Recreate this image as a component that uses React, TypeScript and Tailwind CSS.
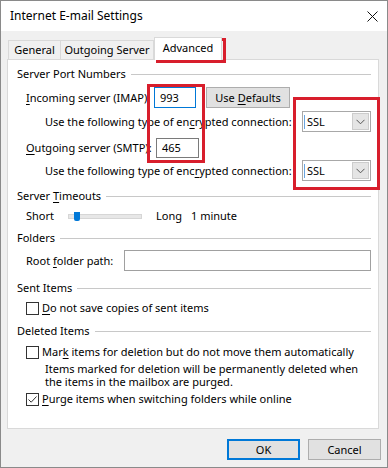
import type { ReactNode } from 'react';

function U({ children }: { children: ReactNode }) {
  return <span className="underline decoration-1 underline-offset-[2px]">{children}</span>;
}

function GroupHeader({ children, className = '' }: { children: ReactNode; className?: string }) {
  return (
    <div className={`flex items-center h-4 pl-[9px] pr-[7px] ${className}`}>
      <span>{children}</span>
      <div className="ml-[5px] flex-1 h-px bg-[#c8c8c8]" />
    </div>
  );
}

function Checkbox({ checked = false }: { checked?: boolean }) {
  return (
    <div className="w-[13px] h-[13px] border border-[#333] bg-white shrink-0 flex items-center justify-center">
      {checked && (
        <svg width="11" height="11" viewBox="0 0 11 11">
          <path d="M1.5 5.5 L4.2 8.2 L9.5 2.5" fill="none" stroke="#333" strokeWidth="1" />
        </svg>
      )}
    </div>
  );
}

function SslSelect() {
  return (
    <div className="w-[69px] h-[21px] border border-[#a8a8a8] bg-white flex items-center pl-px pr-px">
      <div className="w-px h-[14px] bg-[#6aa5e0]" />
      <span className="ml-[2px] flex-1">SSL</span>
      <div className="w-[17px] h-[17px] bg-[#e5e5e5] border border-[#cccccc] flex items-center justify-center">
        <svg width="9" height="6" viewBox="0 0 9 6">
          <path d="M0.5 0.8 L4.5 4.8 L8.5 0.8" fill="none" stroke="#555" strokeWidth="1" />
        </svg>
      </div>
    </div>
  );
}

export default function App() {
  return (
    <div className="relative w-[388px] h-[468px] overflow-hidden border border-[#8a8a8a] bg-[#f0f0f0] text-black text-[11px] leading-4 whitespace-nowrap font-['Noto_Sans',sans-serif] flex flex-col">
      {/* Title bar */}
      <div className="h-[30px] bg-white flex items-center justify-between pl-[9px] pr-[9px] shrink-0 text-[12px]">
        <span>Internet E-mail Settings</span>
        <svg width="11" height="11" viewBox="0 0 11 11">
          <path d="M0.5 0.5 L10.5 10.5 M10.5 0.5 L0.5 10.5" stroke="#111" strokeWidth="1" />
        </svg>
      </div>

      {/* Tabs */}
      <div className="relative z-10 mt-[6px] h-[23px] flex items-end pl-[7px]">
        <div className="h-[19px] mb-px w-[52px] border-l border-t border-[#d9d9d9] flex items-center justify-center">
          General
        </div>
        <div className="h-[19px] mb-px w-[94px] border-l border-t border-r border-[#d9d9d9] flex items-center justify-center">
          Outgoing Server
        </div>
        <div className="h-[23px] w-[68px] bg-white border-l border-t border-r border-[#d9d9d9] flex items-center justify-center pb-[3px]">
          Advanced
        </div>
      </div>

      {/* Tab panel */}
      <div className="-mt-px ml-[6px] w-[372px] h-[370px] bg-white border border-[#d9d9d9] pt-[6px] flex flex-col">
        <GroupHeader>Server Port Numbers</GroupHeader>

        <div className="mt-[5px] h-[21px] flex items-center pl-[18px]">
          <span className="w-[128px]"><U>I</U>ncoming server (IMAP):</span>
          <div className="w-[42px] h-[21px] border border-[#0078d7] flex items-center pl-[5px]">993</div>
          <div className="ml-[10px] w-[84px] h-[21px] bg-[#e1e1e1] border border-[#adadad] flex items-center justify-center">
            Use&nbsp;<U>D</U>efaults
          </div>
        </div>

        <div className="mt-[3px] h-[21px] flex items-center pl-[37px]">
          <span className="w-[257px]">Use the following type of en<U>c</U>rypted connection:</span>
          <SslSelect />
        </div>

        <div className="mt-[5px] h-[21px] flex items-center pl-[18px]">
          <span className="w-[130px]"><U>O</U>utgoing server (SMTP):</span>
          <div className="w-[43px] h-[20px] border border-[#7a7a7a] flex items-center pl-[5px]">465</div>
        </div>

        <div className="mt-[2px] h-[21px] flex items-center pl-[37px]">
          <span className="w-[257px]">Use the following type of enc<U>r</U>ypted connection:</span>
          <SslSelect />
        </div>

        <GroupHeader className="mt-[7px]">
          Server <U>T</U>imeouts
        </GroupHeader>

        <div className="mt-[4px] h-4 flex items-center pl-[18px]">
          <span className="w-[42px]">Short</span>
          <div className="relative w-[74px] h-[5px] bg-[#e7e7e7] border border-[#d6d6d6]">
            <div className="absolute left-[5px] -top-[3px] w-[6px] h-[9px] bg-[#0078d7] rounded-b-[2px]" />
          </div>
          <span className="ml-[14px] w-[35px]">Long</span>
          <span>1 minute</span>
        </div>

        <GroupHeader className="mt-[6px]">Folders</GroupHeader>

        <div className="mt-[4px] h-[21px] flex items-center pl-[18px]">
          <span className="w-[98px]">Root <U>f</U>older path:</span>
          <div className="w-[247px] h-[21px] border border-[#a0a0a0]" />
        </div>

        <GroupHeader className="mt-[9px]">Sent Items</GroupHeader>

        <div className="mt-[4px] h-4 flex items-center pl-[18px] gap-[3px]">
          <Checkbox />
          <span><U>D</U>o not save copies of sent items</span>
        </div>

        <GroupHeader className="mt-[7px]">Deleted Items</GroupHeader>

        <div className="mt-[5px] h-4 flex items-center pl-[18px] gap-[3px]">
          <Checkbox />
          <span>Mar<U>k</U> items for deletion but do not move them automatically</span>
        </div>

        <div className="mt-[2px] pl-[37px] pr-[10px] leading-[13px]">
          Items marked for deletion will be permanently deleted when
          <br />
          the items in the mailbox are purged.
        </div>

        <div className="mt-[3px] h-4 flex items-center pl-[18px] gap-[3px]">
          <Checkbox checked />
          <span><U>P</U>urge items when switching folders while online</span>
        </div>
      </div>

      {/* Buttons */}
      <div className="mt-[10px] flex justify-end gap-[8px] pr-[6px]">
        <div className="w-[73px] h-[21px] bg-[#e1e1e1] border-2 border-[#0078d7] flex items-center justify-center">OK</div>
        <div className="w-[73px] h-[21px] bg-[#e1e1e1] border border-[#adadad] flex items-center justify-center">Cancel</div>
      </div>

      {/* Red annotation boxes */}
      <div className="pointer-events-none">
        <div className="absolute left-[155px] top-[37px] w-[70px] h-[25px] border-[3px] border-[#d81e2c]" />
        <div className="absolute left-[146px] top-[83px] w-[58px] h-[79px] border-[3px] border-[#d81e2c]" />
        <div className="absolute left-[292px] top-[96px] w-[87px] h-[93px] border-[3px] border-[#d81e2c]" />
      </div>
    </div>
  );
}
